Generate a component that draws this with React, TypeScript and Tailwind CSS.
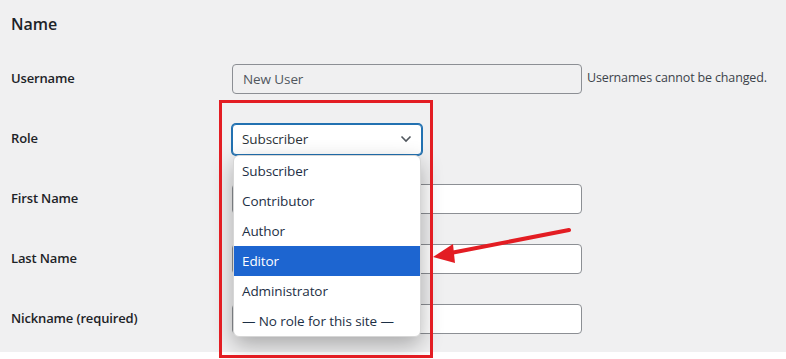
import React from "react";

const font = { fontFamily: '"Open Sans", "Noto Sans", sans-serif' };

function Row({ label, children }: { label: string; children?: React.ReactNode }) {
  return (
    <div className="flex h-[60px] items-center">
      <div className="w-[221px] pb-[1px] text-[13px] font-semibold tracking-[-0.15px] text-[#1d2327]">{label}</div>
      <div className="flex items-center">{children}</div>
    </div>
  );
}

function TextInput({ value, disabled }: { value?: string; disabled?: boolean }) {
  return (
    <div
      className={`flex h-[30px] w-[350px] items-center rounded-[4px] border border-[#8c8f94] px-[10px] text-[13.5px] tracking-[-0.1px] text-[#50575e] ${
        disabled ? "bg-[#f0f0f1]" : "bg-white"
      }`}
    >
      {value}
    </div>
  );
}

const roles = ["Subscriber", "Contributor", "Author", "Editor", "Administrator", "— No role for this site —"];

export default function App() {
  return (
    <div className="relative h-[359px] w-[786px] overflow-hidden bg-white" style={font}>
      <div className="h-[352px] bg-[#f0f0f1] pl-[11px]">
        <div className="flex h-[49px] items-start pt-[12px]">
          <h2 className="text-[16px] font-semibold leading-[24px] text-[#1d2327]">Name</h2>
        </div>
        <Row label="Username">
          <TextInput value="New User" disabled />
          <span className="ml-[5px] pb-[1px] text-[12.5px] tracking-[-0.15px] text-[#3c434a]">Usernames cannot be changed.</span>
        </Row>
        <Row label="Role">
          <div className="flex h-[31px] w-[190px] items-center justify-between rounded-[4px] border border-[#2271b1] bg-white pl-[9px] pr-[9px] text-[13.5px] tracking-[-0.1px] text-[#2c3338] shadow-[0_0_0_1px_#2271b1]">
            <span>Subscriber</span>
            <svg width="12" height="8" viewBox="0 0 12 8" fill="none">
              <path d="M1.5 1.5 L6 6 L10.5 1.5" stroke="#50575e" strokeWidth="1.6" />
            </svg>
          </div>
        </Row>
        <Row label="First Name">
          <TextInput />
        </Row>
        <Row label="Last Name">
          <TextInput />
        </Row>
        <Row label="Nickname (required)">
          <TextInput />
        </Row>
      </div>

      {/* dropdown list */}
      <div className="absolute left-[233px] top-[155px] w-[188px] overflow-hidden rounded-[6px] border border-[#d6d6d6] bg-white shadow-[0_8px_22px_rgba(0,0,0,0.3)]">
        {roles.map((r) => (
          <div
            key={r}
            className={`flex h-[30px] items-center px-[8px] text-[13.5px] tracking-[-0.1px] ${
              r === "Editor" ? "bg-[#1d65d0] text-white" : "text-[#1d2f45]"
            }`}
          >
            {r}
          </div>
        ))}
      </div>

      {/* red highlight box */}
      <div className="pointer-events-none absolute left-[219px] top-[100px] h-[258px] w-[214px] border-[3px] border-[#e31d23]" />

      {/* arrow */}
      <svg className="pointer-events-none absolute left-0 top-0" width="786" height="359">
        <line x1="569" y1="230" x2="448" y2="253.5" stroke="#e31d23" strokeWidth="4" strokeLinecap="round" />
        <polygon points="433,257 453,244 455,263" fill="#e31d23" />
      </svg>
    </div>
  );
}
